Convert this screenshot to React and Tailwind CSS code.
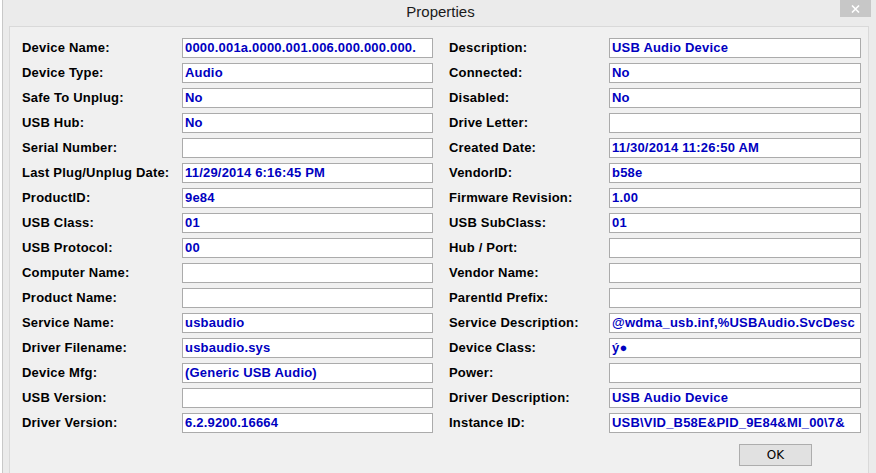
const rows = [
  ["Device Name:", "0000.001a.0000.001.006.000.000.000.", "Description:", "USB Audio Device"],
  ["Device Type:", "Audio", "Connected:", "No"],
  ["Safe To Unplug:", "No", "Disabled:", "No"],
  ["USB Hub:", "No", "Drive Letter:", ""],
  ["Serial Number:", "", "Created Date:", "11/30/2014 11:26:50 AM"],
  ["Last Plug/Unplug Date:", "11/29/2014 6:16:45 PM", "VendorID:", "b58e"],
  ["ProductID:", "9e84", "Firmware Revision:", "1.00"],
  ["USB Class:", "01", "USB SubClass:", "01"],
  ["USB Protocol:", "00", "Hub / Port:", ""],
  ["Computer Name:", "", "Vendor Name:", ""],
  ["Product Name:", "", "ParentId Prefix:", ""],
  ["Service Name:", "usbaudio", "Service Description:", "@wdma_usb.inf,%USBAudio.SvcDesc"],
  ["Driver Filename:", "usbaudio.sys", "Device Class:", "ý●"],
  ["Device Mfg:", "(Generic USB Audio)", "Power:", ""],
  ["USB Version:", "", "Driver Description:", "USB Audio Device"],
  ["Driver Version:", "6.2.9200.16664", "Instance ID:", "USB\\VID_B58E&PID_9E84&MI_00\\7&"],
];

const Field = ({ value, width }) => (
  <div
    className={`${width} h-[20px] shrink-0 bg-white border border-[#ababab] pl-[2px] overflow-hidden whitespace-nowrap text-[#0000c0] leading-[18px]`}
  >
    {value}
  </div>
);

const App = () => {
  return (
    <div className="h-[473px] w-[876px] overflow-hidden flex bg-white font-['Liberation_Sans',Arial,sans-serif]">
      <div className="w-[2px] bg-white shrink-0" />
      <div className="flex-1 flex flex-col bg-[#ebebeb] border-l border-[#c8c8c8]">
        <div className="h-[26px] shrink-0 relative flex items-center justify-center">
          <span className="text-[15px] text-[#1a1a1a] pl-[2px] -mt-[2px]">Properties</span>
          <div className="absolute top-0 right-[5px] w-[31px] h-[17px] bg-[#c7c7c7] flex items-center justify-center">
            <svg width="9" height="8" viewBox="0 0 9 8">
              <path d="M1 0.5 L8 7.5 M8 0.5 L1 7.5" stroke="white" strokeWidth="1.6" />
            </svg>
          </div>
        </div>
        <div className="flex-1 ml-[6px] mr-[7px] bg-[#f0f0f0] border-l border-t border-r border-[#d9d9d9] pl-[12px] pt-[11px]">
          <div className="flex flex-col gap-[5px] text-[13px] font-bold tracking-[0.2px] text-black">
            {rows.map(([l1, v1, l2, v2]) => (
              <div key={l1} className="flex items-center">
                <div className="w-[160px] shrink-0 whitespace-nowrap">{l1}</div>
                <Field value={v1} width="w-[251px]" />
                <div className="w-[160px] ml-[16px] shrink-0 whitespace-nowrap">{l2}</div>
                <Field value={v2} width="w-[252px]" />
              </div>
            ))}
          </div>
          <div className="flex justify-end pr-[56px] mt-[11px]">
            <button className="w-[73px] h-[22px] bg-[#e1e1e1] border border-[#adadad] text-[12px] text-black font-['DejaVu_Sans',sans-serif] leading-[20px]">
              OK
            </button>
          </div>
        </div>
      </div>
    </div>
  );
};

export default App;
